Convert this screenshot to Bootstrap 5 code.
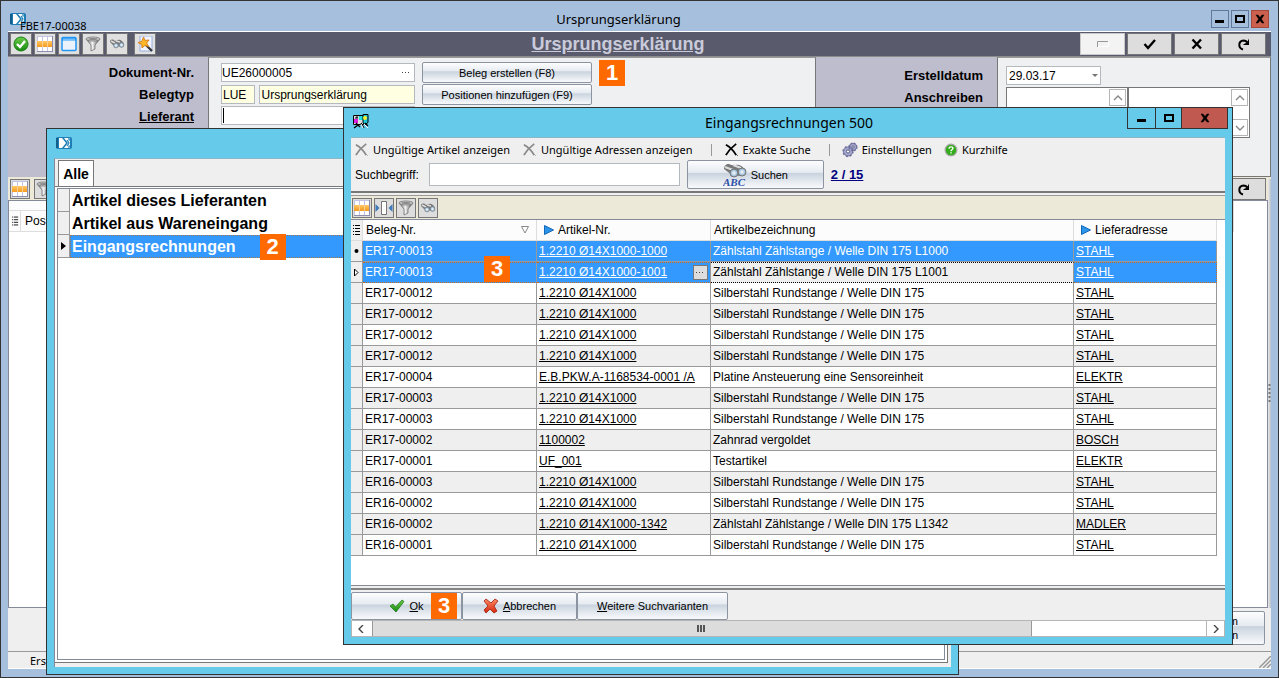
<!DOCTYPE html>
<html lang="de">
<head>
<meta charset="utf-8">
<meta name="viewport" content="width=device-width, initial-scale=1">
<title>Ursprungserklärung</title>
<link href="https://cdn.jsdelivr.net/npm/bootstrap@5.3.0/dist/css/bootstrap.min.css" rel="stylesheet">
<style>
  body { font: 12px/16px "Liberation Sans", Arial, sans-serif; color: #000; overflow: hidden; }
  button { font: inherit; color: inherit; }
  a { color: inherit; }
  svg { display: block; flex: none; }
  .ui-font { font-family: "Noto Sans", "Open Sans", sans-serif; }

  /* main window */
  .main-window { background: #a6bfdc; border: 1px solid #333; padding: 0 7px 8px; }
  .main-title { height: 31px; border-bottom: 1px solid #fff; padding-right: 42px; }
  .title-text { font-size: 14px; line-height: 18px; }
  .main-title .title-text { font-size: 13px; margin-top: 9px; }
  .doc-id { left: 12px; top: 18px; font-size: 11px; line-height: 14px; }
  .doc-icon { left: 2px; top: 12px; }
  .win-btns { gap: 2px; top: 9px; right: 2px; }
  .win-btns button { width: 18px; height: 18px; padding: 0; border: 1px solid #62779c; background: #a6bfdc; display: grid; place-items: center; }
  .win-btns .close-btn { background: #cb604f; border-color: #a5483c; }
  .dark-bar { background: #595b6c; height: 24px; gap: 2px; padding: 1px 5px 1px 2px; }
  .dark-bar h1 { font-size: 18px; line-height: 22px; font-weight: bold; color: #c9cbdb; text-decoration: underline; margin: 0; }
  .tool-btn { width: 22px; height: 22px; padding: 0; border: 1px solid #777; background: #e0e0e0; display: grid; place-items: center; flex: none; }
  .nav-btn { width: 45px; height: 22px; padding: 0; border: 1px solid #777; background: #ddd; display: grid; place-items: center; }
  .nav-btn.disabled-look { background: #f3f3f3; border-color: #c9c9c9; }

  .form-area { display: grid; grid-template-columns: 200px 1fr 181px 274px; height: 121px; border-top: 1px solid #8c8c8c; }
  .label-col { background: #bdbdce; font-weight: bold; font-size: 13px; line-height: 22px; text-align: right; padding: 5px 14px 0 0; }
  .label-col label { display: block; }
  .field-col { background: #eff0f2; border: 1px solid #777; border-top-color: #999; padding: 4px 0 0 12px; }
  .field { height: 19px; border: 1px solid #b4b9bf; background: #fff; padding: 0; font: inherit; border-radius: 0; min-width: 0; color: #000; }
  .field.yellow { background: #ffffe1; padding-left: 1px; }
  .field.with-caret { background: linear-gradient(#000, #000) 1px 1px / 1px 15px no-repeat #fff; }
  .form-grid { display: grid; grid-template-columns: 194px 170px 26px; column-gap: 7px; row-gap: 1px; }
  .w-code { width: 35px; }
  .glossy { border: 1px solid #8c93a1; border-radius: 2px; background: linear-gradient(#fdfdfe 0%, #e6ebf1 42%, #c9d3de 46%, #e4e9ef 75%, #f8f9fb 100%); padding: 0; font-size: 11px; }
  .form-grid .glossy { height: 21px; line-height: 18px; }
  .callout-no { background: #ff6a00; color: #fff; font: bold 22px/26px "Liberation Sans", Arial, sans-serif; width: 26px; height: 26px; text-align: center; display: block; text-decoration: none; }
  .memo-pair { margin-top: 2px; }
  .memo { border: 1px solid #777; background: #fff; height: 51px; width: 122px; padding: 1px; }
  .memo textarea { border: 0; resize: none; min-width: 0; }
  .scroll-btn { width: 17px; height: 17px; border: 1px solid #b5b5b5; background: #fff; padding: 0; display: grid; place-items: center; flex: none; }
  .date-box { width: 95px; height: 19px; border: 1px solid #b4b9bf; background: #fff; }
  .date-box input { border: 0; padding: 0 2px; min-width: 0; }
  .date-box button { border: 0; background: none; padding: 0; width: 20px; display: grid; place-items: center; }

  .beige { background: #ece9d8; }
  .lower-strip { height: 23px; padding: 0 5px 0 2px; }
  .sq-btn { width: 20px; height: 20px; border: 1px solid #777; background: #ddd; padding: 0; display: grid; place-items: center; }
  .pos-grid { background: #fff; border: 1px solid #858a98; margin-right: 3px; }
  .pos-head { max-width: calc(100% - 33px); background: #fcfcfc; border-right: 1px solid #ddd; border-bottom: 1px solid #ddd; height: 31px; }
  .pos-head span { line-height: 20px; height: 21px; border-top: 1px solid #ddd; border-right: 1px solid #ddd; }
  .pos-head .pos-mark { width: 12px; padding: 5px 0 0 3px; }
  .pos-head .pos-mark svg { width: 7px; }
  .foot-area { background: #efefef; height: 43px; padding: 3px 6px 6px; gap: 6px; }
  .foot-area .glossy { width: 113px; line-height: 14px; padding-right: 26px; text-align: right; }
  .status-line { background: #efefef; border-top: 1px solid #999; border-bottom: 1px solid #fff; height: 18px; padding-left: 22px; font-size: 11px; line-height: 17px; }
  .splitter { right: 7px; top: 178px; bottom: 69px; width: 3px; background: linear-gradient(90deg, #e9e9e9, #b9bfc9); }
  .splitter svg { margin-top: 205px; }

  /* cyan windows */
  .cyan-window { background: #66cbea; border: 1px solid #333; position: absolute; }
  .chooser { left: 45px; top: 127px; right: 319px; bottom: 2px; padding: 0 7px 7px; }
  .chooser-title { height: 29px; padding: 8px 0 0 2px; }
  .chooser-body { background: #efefef; border-top: 1px solid #8fb6c6; border-left: 1px solid #858a98; padding: 0 3px 4px 0; }
  .tab-strip { height: 27px; padding: 1px 0 0 3px; }
  .tab-strip button { background: #fff; border: 1px solid #777; border-bottom: 0; font-size: 14px; font-weight: bold; width: 36px; padding: 0; }
  .tab-body { background: #fff; border: solid #777; border-width: 1px 1px 1px 0; padding: 1px 2px 2px; }
  .pick-box { border: 1px solid #858a98; }
  .pick-row { height: 23px; display: grid; grid-template-columns: 12px 1fr; font-size: 16px; line-height: 22px; font-weight: bold; }
  .pick-row .mark-cell { background: #efefef; border: solid #999; border-width: 0 1px 1px 0; display: grid; place-items: center; }
  .pick-row button { border: 1px solid transparent; background: none; text-align: left; padding: 0 1px; font-weight: bold; line-height: 21px; }
  .pick-row button.selected-pick { background: #39f; color: #fff; border: 1px dotted #a8754d; }

  .invoices { left: 342px; top: 106px; right: 45px; bottom: 32px; padding: 0 7px 7px; }
  .inv-title { height: 29px; }
  .inv-title .title-text { margin-top: 6px; }
  .inv-icon { margin: 4px 0 0 2px; }
  .inv-btns { right: -3px; top: -1px; border: 1px solid #333; height: 22px; }
  .inv-btns button { border: 0; border-left: 1px solid #333; background: #66cbea; padding: 0; display: grid; place-items: center; }
  .inv-btns button:nth-child(1) { width: 27px; border-left: 0; }
  .inv-btns button:nth-child(2) { width: 26px; }
  .inv-btns button:nth-child(3) { width: 46px; background: #c05a50; }
  .inv-body { background: #efefef; border-top: 1px solid #8fb6c6; }
  .menu-line { height: 23px; padding-left: 3px; font-size: 11px; }
  .menu-line button { border: 0; background: none; padding: 0; display: flex; align-items: center; gap: 4px; white-space: nowrap; line-height: 18px; }
  .menu-sep { width: 1px; height: 12px; background: #999; margin-left: 18px; }
  .search-line { height: 32px; padding: 0 0 3px 4px; border-bottom: 2px solid #777; }
  .search-line input { width: 251px; height: 23px; border: 1px solid #b4b9bf; margin: 0 7px 0 10px; padding: 0 3px; }
  .search-line .glossy { width: 137px; height: 29px; gap: 4px; }
  .hit-count { color: #000080; font: bold 13px/16px "Liberation Sans", sans-serif; margin-left: 7px; }
  .inv-tools { height: 25px; border-top: 1px solid #999; border-bottom: 1px solid #858a98; margin-top: 2px; padding-left: 1px; gap: 2px; }
  .data-area { background: #fff; border-bottom: 1px solid #858a98; padding-right: 8px; }
  .inv-table { table-layout: fixed; width: 100%; border-collapse: separate; border-spacing: 0; }
  .col-mark { width: 12px; }
  .col-doc { width: 174px; }
  .col-addr { width: 143px; }
  .inv-table th, .inv-table td { height: 21px; padding: 0 2px; font-weight: normal; line-height: 20px; border: solid #999; border-width: 0 1px 1px 0; white-space: nowrap; overflow: hidden; }
  .inv-table th { background: #fcfcfc; border-color: #ddd; padding: 0 3px; }
  .inv-table tr > :first-child { padding: 0; background: #efefef; }
  .inv-table tbody tr:nth-child(even) { background: #efefef; }
  .inv-table tbody tr.hit { background: #39f; color: #fff; }
  .inv-table tr.hit > td { overflow: visible; }
  .inv-table tr.current td:not(:first-child) { border-top: 1px dotted #c96a1b; border-bottom: 1px dotted #c96a1b; line-height: 19px; }
  .inv-table tr.current td.edit-cell { background: #efefef; color: #000; border-top-color: #000 !important; border-bottom-color: #000 !important; }
  .inv-table tr.current td:last-child { border-right: 1px dotted #c96a1b; }
  .dots-btn { width: 15px; height: 15px; border: 1px solid #777; background: #ddd; padding: 0; display: grid; place-items: center; }
  .action-bar { border-top: 2px solid #858585; margin-top: 2px; padding-top: 2px; height: 32px; }
  .action-bar .glossy { height: 28px; gap: 4px; width: 115px; }
  .action-bar .glossy:first-child { width: 111px; }
  .action-bar .glossy:last-child { width: 151px; }
  .hbar { height: 17px; background: #fff; border: 1px solid #b5b5b5; }
  .hbar button { border: 0; background: none; width: 17px; padding: 0; display: grid; place-items: center; }
  .hbar-thumb { flex: 661 1 0; background: #dcdcdc; border: solid #999; border-width: 0 1px; margin-left: 3px; display: grid; place-items: center; }
  .hbar-rest { flex: 175 1 0; border-right: 1px solid #b5b5b5; }
</style>
</head>
<body>

<svg width="0" height="0" class="position-absolute" aria-hidden="true">
  <defs>
    <linearGradient id="gMetal" x1="0" x2="1"><stop offset="0" stop-color="#555"/><stop offset=".45" stop-color="#f4f4f4"/><stop offset="1" stop-color="#444"/></linearGradient>
    <linearGradient id="gGreen" x1="0" x2="0" y1="0" y2="1"><stop offset="0" stop-color="#6ccc4a"/><stop offset="1" stop-color="#158a10"/></linearGradient>
    <linearGradient id="gRed" x1="0" x2="0" y1="0" y2="1"><stop offset="0" stop-color="#ff8a66"/><stop offset="1" stop-color="#d4260c"/></linearGradient>
    <linearGradient id="gOrange" x1="0" x2="0" y1="0" y2="1"><stop offset="0" stop-color="#ffc766"/><stop offset="1" stop-color="#f49a1e"/></linearGradient>
    <radialGradient id="gLens"><stop offset="0" stop-color="#fff"/><stop offset="1" stop-color="#7fa9cc"/></radialGradient>
    <symbol id="app" viewBox="0 0 16 12"><rect width="16" height="12" rx="2" fill="#1f7fb5"/><path d="M1 1v10" stroke="#125e8c" stroke-width="2"/><path d="M3 1h3l4 5-4 5H3z" fill="#fff"/><path d="M8 1h6v10H8l4-5z" fill="#fff"/><path d="M11 3l2 3-2 3M13 1v2h2M13 11V9h2" fill="none" stroke="#1f7fb5" stroke-width="1.200"/></symbol>
    <symbol id="ok" viewBox="0 0 16 16"><circle cx="8" cy="8" r="7" fill="url(#gGreen)" stroke="#178014"/><path d="M4 8l3 3 5-6" fill="none" stroke="#fff" stroke-width="2.400"/></symbol>
    <symbol id="grid" viewBox="0 0 16 16"><path d="M0 0h16v16H0z" fill="#fff"/><path d="M5.500 0v16M10.500 0v16M.5 0v16M0 .5h16" stroke="#c3c3e3"/><path d="M0 5h16v6H0z" fill="url(#gOrange)"/><path d="M5.500 5v6M10.500 5v6" stroke="#f9d08f"/><path d="M0 15.500h16M15.500 0v16" stroke="#8d8db0"/></symbol>
    <symbol id="win" viewBox="0 0 16 16"><rect x="1" y="1.500" width="14" height="13" rx="1" fill="#eaf3fc" stroke="#2196f3" stroke-width="1.500"/><path d="M1 3h14" stroke="#2196f3" stroke-width="3"/><path d="M2 3.200h12" stroke="#9ed3ff"/></symbol>
    <symbol id="funnel" viewBox="0 0 16 16"><path d="M1 3l5 6v6l4-2V9l5-6z" fill="url(#gMetal)" stroke="#666" stroke-width=".7"/><ellipse cx="8" cy="3" rx="7" ry="2" fill="#c9c9c9" stroke="#777" stroke-width=".8"/><ellipse cx="8" cy="3" rx="4.500" ry="1" fill="#8a8a8a"/></symbol>
    <symbol id="bino" viewBox="0 0 16 16"><path d="M1 6c0-3 3-3 5-1l3-1c2-1 5 1 6 4l-2 3-5-1-4-1z" fill="#777"/><path d="M2 5l4 2M7 5l4 1" stroke="#ddd" stroke-width="1.500"/><circle cx="7" cy="9.500" r="2.400" fill="url(#gLens)" stroke="#777" stroke-width=".6"/><circle cx="12.500" cy="9" r="2.400" fill="url(#gLens)" stroke="#777" stroke-width=".6"/></symbol>
    <symbol id="wand" viewBox="0 0 16 16"><path d="M3 0h12v15H3z" fill="#f2f5ff" stroke="#9aaede"/><path d="M9 9l6 6" stroke="#333" stroke-width="2.200"/><path d="M6.500 1l1.600 3.400 3.900-.4-2.400 3 2 3.600-3.700-1.200L5 12l-.2-3.600L1 6.600l3.800-1.200z" fill="#fdb827" stroke="#d67b14" stroke-width=".9"/></symbol>
    <symbol id="colw" viewBox="0 0 18 16"><path d="M6.500 1.500h5v13h-5z" fill="#fff" stroke="#777"/><path d="M.5 4v8l4-4zM17.500 4v8l-4-4z" fill="#3f79b8"/></symbol>
    <symbol id="ximg" viewBox="0 0 16 16"><path d="M2 3c4 2 8 6 11 11M13 2C9 5 5 9 2 14" fill="none" stroke="currentColor" stroke-width="1.900"/><path d="M13.500 13.500l1 1" stroke="currentColor"/></symbol>
    <symbol id="gears" viewBox="0 0 16 16"><g fill="#a7a9cd" stroke="#5a5c8c" stroke-width=".8"><circle cx="11" cy="5" r="3.600"/><circle cx="6" cy="9.500" r="4.500"/></g><circle cx="6" cy="9.500" r="5" fill="none" stroke="#6c6e9c" stroke-width="1.300" stroke-dasharray="2 1.900"/><circle cx="11" cy="5" r="4" fill="none" stroke="#6c6e9c" stroke-width="1.200" stroke-dasharray="1.700 1.500"/><circle cx="6" cy="9.500" r="1.600" fill="#fff" stroke="#5a5c8c"/><circle cx="11" cy="5" r="1.200" fill="#fff" stroke="#5a5c8c"/></symbol>
    <symbol id="help" viewBox="0 0 16 16"><circle cx="8" cy="8" r="6.700" fill="#33ad1b" stroke="#a9a9a9" stroke-width="1.400"/><path d="M5.800 6.500c0-3 4.600-2.600 4.400-.2C10 7.700 8 7.800 8 9.400M8 10.500v1.500" fill="none" stroke="#fff" stroke-width="1.600"/></symbol>
    <symbol id="tri" viewBox="0 0 10 10"><path d="M.5.500v9L9.500 5z" fill="#2b95ea" stroke="#1567b8"/></symbol>
    <symbol id="tick" viewBox="0 0 16 14"><path d="M1 7l3-2 2.500 3L13 1l2 1.500L7 13z" fill="url(#gGreen)" stroke="#13700f" stroke-width=".7"/></symbol>
    <symbol id="redx" viewBox="0 0 16 16"><path d="M3 1l5 4 4-4 3 2-4 5 3 5-3 2-4-4-4 4-2-3 4-4-4-5z" fill="url(#gRed)" stroke="#a01c08" stroke-width=".8"/></symbol>
    <symbol id="redo" viewBox="0 0 14 14"><path d="M6 12.500C1 11 1 4 6.500 3.500c2 0 3 .8 4 2" fill="none" stroke="#000" stroke-width="2"/><path d="M12 1.500v6.500H5.800l2-1.500 2.200-.8z" fill="#000"/></symbol>
    <symbol id="up" viewBox="0 0 10 10"><path d="M1 7l4-4 4 4" fill="none" stroke="#888" stroke-width="1.400"/></symbol>
    <symbol id="down" viewBox="0 0 10 10"><path d="M1 3l4 4 4-4" fill="none" stroke="#888" stroke-width="1.400"/></symbol>
    <symbol id="cross" viewBox="0 0 10 10"><path d="M1 1h2l2 2.500L7 1h2L6.300 5 9 9H7L5 6.500 3 9H1l2.700-4z" fill="#000" stroke="#000" stroke-width=".5"/></symbol>
    <symbol id="mini" viewBox="0 0 10 10"><path d="M0 6h9v3H0z"/></symbol>
    <symbol id="maxi" viewBox="0 0 10 10"><path d="M1 2h8v6H1z" fill="none" stroke="#000" stroke-width="2"/></symbol>
    <symbol id="rows" viewBox="0 0 8 10"><path d="M0 .5h1M2 .5h5M0 3.500h1M2 3.500h5M0 6.500h1M2 6.500h5M0 9.500h1M2 9.500h5" stroke="#000"/></symbol>
    <symbol id="report" viewBox="0 0 16 15"><path d="M0 1h10v10H0z" fill="#fff"/><path d="M.5 1.500h10v9H.5zM2 4h3M4 1v3" fill="#ddd" stroke="#000"/><path d="M1 5h4v4H1z" fill="#e01ce0"/><path d="M6 2h4v4H6z" fill="#1fe0e0"/><path d="M10 .5h5v8l-3 2-2-2z" fill="#19c8d8" stroke="#000"/><circle cx="12" cy="4" r="2" fill="#ffee2a"/><path d="M1 14l4-3M3 9l4 4M8 9l3 5M12 9l3 3" stroke="#000" stroke-width="1.300"/><path d="M8 10l2 4M11 10l4 4" stroke="#fff"/></symbol>
    <symbol id="dots" viewBox="0 0 9 2"><path d="M0 .5h1M3 .5h1M6 .5h1" stroke="#444"/></symbol>
  </defs>
</svg>

<main class="main-window d-flex flex-column vh-100 position-relative">
  <header class="main-title d-flex justify-content-center position-relative flex-shrink-0">
    <svg class="doc-icon position-absolute" width="16" height="12"><use href="#app"/></svg>
    <span class="doc-id ui-font position-absolute">FBE17-00038</span>
    <span class="title-text ui-font">Ursprungserklärung</span>
    <div class="win-btns d-flex position-absolute">
      <button type="button" aria-label="Minimieren"><svg width="10" height="10"><use href="#mini"/></svg></button>
      <button type="button" aria-label="Maximieren"><svg width="10" height="10"><use href="#maxi"/></svg></button>
      <button type="button" class="close-btn" aria-label="Schließen"><svg width="10" height="10"><use href="#cross"/></svg></button>
    </div>
  </header>

  <div class="dark-bar d-flex flex-shrink-0">
    <button type="button" class="tool-btn" aria-label="Bestätigen"><svg width="16" height="16"><use href="#ok"/></svg></button>
    <button type="button" class="tool-btn" aria-label="Tabelle"><svg width="16" height="16"><use href="#grid"/></svg></button>
    <button type="button" class="tool-btn" aria-label="Fenster"><svg width="16" height="16"><use href="#win"/></svg></button>
    <button type="button" class="tool-btn" aria-label="Filter"><svg width="16" height="16"><use href="#funnel"/></svg></button>
    <button type="button" class="tool-btn" aria-label="Suchen"><svg width="16" height="16"><use href="#bino"/></svg></button>
    <button type="button" class="tool-btn ms-1" aria-label="Assistent"><svg width="16" height="16"><use href="#wand"/></svg></button>
    <h1 class="flex-grow-1 text-center">Ursprungserklärung</h1>
    <button type="button" class="nav-btn disabled-look" aria-label="Leeren"><svg width="12" height="6"><path d="M.5 6V.5H11" fill="none" stroke="#999"/><path d="M11.500 1v4.500H1" fill="none" stroke="#fff"/></svg></button>
    <button type="button" class="nav-btn" aria-label="Speichern"><svg width="14" height="12"><path d="M1.500 6l3.500 4L12 2" fill="none" stroke="#000" stroke-width="2.400"/></svg></button>
    <button type="button" class="nav-btn" aria-label="Abbrechen"><svg width="12" height="12"><path d="M1.500 1.500l8.500 9M10 1.500l-8.500 9" stroke="#000" stroke-width="2.400"/></svg></button>
    <button type="button" class="nav-btn" aria-label="Aktualisieren"><svg width="14" height="14"><use href="#redo"/></svg></button>
  </div>

  <form class="form-area flex-shrink-0">
    <div class="label-col">
      <label for="docNo">Dokument-Nr.</label>
      <label for="typeCode">Belegtyp</label>
      <label for="supplier" class="text-decoration-underline">Lieferant</label>
    </div>
    <div class="field-col">
      <div class="form-grid">
        <div class="position-relative d-flex align-items-center">
          <input id="docNo" class="field w-100" value="UE26000005">
          <svg class="position-absolute end-0 me-1" width="9" height="2"><use href="#dots"/></svg>
        </div>
        <button type="button" class="glossy">Beleg erstellen (F8)</button>
        <div class="position-relative"><span class="callout-no position-absolute top-50 start-50 translate-middle">1</span></div>
        <div class="d-flex align-items-center gap-1">
          <input id="typeCode" class="field yellow w-code" value="LUE">
          <input class="field yellow flex-grow-1" aria-label="Belegtyp Bezeichnung" value="Ursprungserklärung">
        </div>
        <button type="button" class="glossy">Positionen hinzufügen (F9)</button>
        <span></span>
        <div class="d-flex"><input id="supplier" class="field with-caret w-100" value=""></div>
      </div>
    </div>
    <div class="label-col pt-2">
      <label for="date">Erstelldatum</label>
      <label for="letter">Anschreiben</label>
    </div>
    <div class="field-col ps-2 pt-2">
      <div class="date-box d-flex">
        <input id="date" class="flex-grow-1" value="29.03.17">
        <button type="button" aria-label="Kalender"><svg width="6" height="4"><path d="M0 0h6L3 3z" fill="#777"/></svg></button>
      </div>
      <div class="memo-pair d-flex">
        <div class="memo d-flex">
          <textarea id="letter" class="flex-grow-1"></textarea>
          <div class="d-flex flex-column justify-content-between">
            <button type="button" class="scroll-btn" aria-label="Nach oben"><svg width="10" height="10"><use href="#up"/></svg></button>
            <button type="button" class="scroll-btn" aria-label="Nach unten"><svg width="10" height="10"><use href="#down"/></svg></button>
          </div>
        </div>
        <div class="memo d-flex">
          <textarea class="flex-grow-1" aria-label="Anschreiben Text"></textarea>
          <div class="d-flex flex-column justify-content-between">
            <button type="button" class="scroll-btn" aria-label="Nach oben"><svg width="10" height="10"><use href="#up"/></svg></button>
            <button type="button" class="scroll-btn" aria-label="Nach unten"><svg width="10" height="10"><use href="#down"/></svg></button>
          </div>
        </div>
      </div>
    </div>
  </form>

  <div class="lower-strip beige d-flex align-items-center flex-shrink-0">
    <button type="button" class="sq-btn" aria-label="Tabelle"><svg width="16" height="16"><use href="#grid"/></svg></button>
    <button type="button" class="sq-btn ms-1" aria-label="Filter"><svg width="16" height="16"><use href="#funnel"/></svg></button>
    <button type="button" class="nav-btn ms-auto" aria-label="Aktualisieren"><svg width="14" height="14"><use href="#redo"/></svg></button>
  </div>

  <section class="pos-grid flex-grow-1">
    <div class="pos-head d-flex align-items-end">
      <span class="pos-mark"><svg width="8" height="10"><use href="#rows"/></svg></span>
      <span class="flex-grow-1 ps-1 border-end-0">Pos</span>
    </div>
  </section>

  <div class="foot-area d-flex justify-content-end flex-shrink-0">
    <button type="button" class="glossy" aria-label="Aktion"></button>
    <button type="button" class="glossy">m<br>n</button>
  </div>
  <footer class="status-line ui-font d-flex justify-content-between flex-shrink-0">
    <span>Erst</span>
    <svg class="align-self-end" width="12" height="12"><path d="M0 12L12 0M4 12l8-8M8 12l4-4" stroke="#999" stroke-width="1.500"/></svg>
  </footer>
  <div class="splitter position-absolute"><svg width="3" height="20"><path d="M1.500 0v20" stroke="#777" stroke-width="2" stroke-dasharray="2 2"/></svg></div>

  <!-- source selection window -->
  <section class="cyan-window chooser d-flex flex-column">
    <header class="chooser-title"><svg width="16" height="12"><use href="#app"/></svg></header>
    <div class="chooser-body flex-grow-1 d-flex flex-column">
      <div class="tab-strip d-flex"><button type="button">Alle</button></div>
      <div class="tab-body flex-grow-1 d-flex">
        <div class="pick-box flex-grow-1">
          <div class="pick-row"><span class="mark-cell"></span><button type="button">Artikel dieses Lieferanten</button></div>
          <div class="pick-row"><span class="mark-cell"></span><button type="button">Artikel aus Wareneingang</button></div>
          <div class="pick-row"><span class="mark-cell"><svg width="5" height="8"><path d="M0 0v8l5-4z"/></svg></span>
            <button type="button" class="selected-pick"><span class="position-relative d-inline-block">Eingangsrechnungen<span class="callout-no position-absolute top-50 start-100 translate-middle-y ms-4">2</span></span></button></div>
        </div>
      </div>
    </div>
  </section>

  <!-- incoming invoices window -->
  <section class="cyan-window invoices d-flex flex-column">
    <header class="inv-title d-flex position-relative">
      <svg class="inv-icon" width="16" height="17" viewBox="0 -2 16 17"><use href="#report" width="16" height="15"/></svg>
      <span class="title-text ui-font flex-grow-1 text-center pe-3">Eingangsrechnungen 500</span>
      <div class="inv-btns d-flex position-absolute">
        <button type="button" aria-label="Minimieren"><svg width="10" height="10"><use href="#mini"/></svg></button>
        <button type="button" aria-label="Maximieren"><svg width="10" height="10"><use href="#maxi"/></svg></button>
        <button type="button" aria-label="Schließen"><svg width="10" height="10"><use href="#cross"/></svg></button>
      </div>
    </header>
    <div class="inv-body flex-grow-1 d-flex flex-column">
      <div class="menu-line ui-font d-flex align-items-center">
        <button type="button"><svg width="15" height="15" color="#8a8a8a"><use href="#ximg"/></svg>Ungültige Artikel anzeigen</button>
        <button type="button" class="ms-2 ps-1"><svg width="15" height="15" color="#8a8a8a"><use href="#ximg"/></svg>Ungültige Adressen anzeigen</button>
        <span class="menu-sep"></span>
        <button type="button" class="ms-2 ps-1"><svg width="15" height="15"><use href="#ximg"/></svg>Exakte Suche</button>
        <span class="menu-sep"></span>
        <button type="button" class="ms-2 ps-1"><svg width="16" height="16"><use href="#gears"/></svg>Einstellungen</button>
        <button type="button" class="ms-2 ps-1"><svg width="14" height="14"><use href="#help"/></svg>Kurzhilfe</button>
      </div>
      <div class="search-line d-flex align-items-center">
        <label for="term">Suchbegriff:</label>
        <input id="term" value="">
        <button type="button" class="glossy d-flex align-items-center justify-content-center">
          <svg width="24" height="24" viewBox="0 0 24 24"><path d="M1 6c0-5 5-6 7-4l5 0c5-1 9 3 9 8l-4 3-9-1z" fill="#777"/><path d="M2 4l8 3M10 2l8 3" stroke="#ddd" stroke-width="2"/><circle cx="11" cy="10" r="4" fill="url(#gLens)" stroke="#777"/><circle cx="19" cy="9" r="4" fill="url(#gLens)" stroke="#777"/><text x="0" y="23" font-family="Liberation Serif, serif" font-size="11" font-weight="bold" font-style="italic" fill="#2b4fa5">ABC</text></svg>
          Suchen
        </button>
        <a href="#" class="hit-count">2 / 15</a>
      </div>
      <div class="inv-tools beige d-flex align-items-center">
        <button type="button" class="sq-btn" aria-label="Tabelle"><svg width="16" height="16"><use href="#grid"/></svg></button>
        <button type="button" class="sq-btn" aria-label="Spaltenbreite"><svg width="18" height="16"><use href="#colw"/></svg></button>
        <button type="button" class="sq-btn" aria-label="Filter"><svg width="16" height="16"><use href="#funnel"/></svg></button>
        <button type="button" class="sq-btn" aria-label="Suchen"><svg width="16" height="16"><use href="#bino"/></svg></button>
      </div>
      <div class="data-area flex-grow-1">
        <table class="inv-table">
          <colgroup><col class="col-mark"><col class="col-doc"><col class="col-doc"><col><col class="col-addr"></colgroup>
          <thead>
            <tr>
              <th aria-label="Markierung"><svg width="8" height="10" class="mx-auto"><use href="#rows"/></svg></th>
              <th><div class="d-flex align-items-center justify-content-between pe-1">Beleg-Nr.<svg width="8" height="8"><path d="M.5.500h7L4 7z" fill="#fff" stroke="#888"/></svg></div></th>
              <th><div class="d-flex align-items-center gap-1 ps-1"><svg width="10" height="10"><use href="#tri"/></svg>Artikel-Nr.</div></th>
              <th>Artikelbezeichnung</th>
              <th><div class="d-flex align-items-center gap-1 ps-1"><svg width="10" height="10"><use href="#tri"/></svg>Lieferadresse</div></th>
            </tr>
          </thead>
          <tbody>
            <tr class="hit"><td><svg width="5" height="6" class="mx-auto"><circle cx="2.500" cy="3" r="2"/></svg></td><td>ER17-00013</td><td><a href="#">1.2210 Ø14X1000-1000</a></td><td>Zählstahl Zählstange / Welle DIN 175 L1000</td><td><a href="#">STAHL</a></td></tr>
            <tr class="hit current"><td><svg width="5" height="9" class="mx-auto"><path d="M.5 1v7L4 4.500z" fill="#fff" stroke="#000"/></svg></td><td><div class="position-relative">ER17-00013<span class="callout-no position-absolute bottom-0 end-0 me-4">3</span></div></td><td><div class="d-flex align-items-center justify-content-between"><a href="#">1.2210 Ø14X1000-1001</a><button type="button" class="dots-btn" aria-label="Auswahl"><svg width="9" height="2"><use href="#dots"/></svg></button></div></td><td class="edit-cell">Zählstahl Zählstange / Welle DIN 175 L1001</td><td><a href="#">STAHL</a></td></tr>
            <tr><td></td><td>ER17-00012</td><td><a href="#">1.2210 Ø14X1000</a></td><td>Silberstahl Rundstange / Welle DIN 175</td><td><a href="#">STAHL</a></td></tr>
            <tr><td></td><td>ER17-00012</td><td><a href="#">1.2210 Ø14X1000</a></td><td>Silberstahl Rundstange / Welle DIN 175</td><td><a href="#">STAHL</a></td></tr>
            <tr><td></td><td>ER17-00012</td><td><a href="#">1.2210 Ø14X1000</a></td><td>Silberstahl Rundstange / Welle DIN 175</td><td><a href="#">STAHL</a></td></tr>
            <tr><td></td><td>ER17-00012</td><td><a href="#">1.2210 Ø14X1000</a></td><td>Silberstahl Rundstange / Welle DIN 175</td><td><a href="#">STAHL</a></td></tr>
            <tr><td></td><td>ER17-00004</td><td><a href="#">E.B.PKW.A-1168534-0001 /A</a></td><td>Platine Ansteuerung eine Sensoreinheit</td><td><a href="#">ELEKTR</a></td></tr>
            <tr><td></td><td>ER17-00003</td><td><a href="#">1.2210 Ø14X1000</a></td><td>Silberstahl Rundstange / Welle DIN 175</td><td><a href="#">STAHL</a></td></tr>
            <tr><td></td><td>ER17-00003</td><td><a href="#">1.2210 Ø14X1000</a></td><td>Silberstahl Rundstange / Welle DIN 175</td><td><a href="#">STAHL</a></td></tr>
            <tr><td></td><td>ER17-00002</td><td><a href="#">1100002</a></td><td>Zahnrad vergoldet</td><td><a href="#">BOSCH</a></td></tr>
            <tr><td></td><td>ER17-00001</td><td><a href="#">UF_001</a></td><td>Testartikel</td><td><a href="#">ELEKTR</a></td></tr>
            <tr><td></td><td>ER16-00003</td><td><a href="#">1.2210 Ø14X1000</a></td><td>Silberstahl Rundstange / Welle DIN 175</td><td><a href="#">STAHL</a></td></tr>
            <tr><td></td><td>ER16-00002</td><td><a href="#">1.2210 Ø14X1000</a></td><td>Silberstahl Rundstange / Welle DIN 175</td><td><a href="#">STAHL</a></td></tr>
            <tr><td></td><td>ER16-00002</td><td><a href="#">1.2210 Ø14X1000-1342</a></td><td>Zählstahl Zählstange / Welle DIN 175 L1342</td><td><a href="#">MADLER</a></td></tr>
            <tr><td></td><td>ER16-00001</td><td><a href="#">1.2210 Ø14X1000</a></td><td>Silberstahl Rundstange / Welle DIN 175</td><td><a href="#">STAHL</a></td></tr>
          </tbody>
        </table>
      </div>
      <div class="action-bar d-flex">
        <button type="button" class="glossy d-flex align-items-center justify-content-center position-relative"><svg width="16" height="14"><use href="#tick"/></svg><span><u>O</u>k</span><span class="callout-no position-absolute top-0 end-0 me-1">3</span></button>
        <button type="button" class="glossy d-flex align-items-center justify-content-center"><svg width="16" height="16"><use href="#redx"/></svg><span><u>A</u>bbrechen</span></button>
        <button type="button" class="glossy"><u>W</u>eitere Suchvarianten</button>
      </div>
      <div class="hbar d-flex">
        <button type="button" aria-label="Nach links"><svg width="6" height="8"><path d="M5 0L1 4l4 4" fill="none" stroke="#444" stroke-width="1.400"/></svg></button>
        <div class="hbar-thumb"><svg width="9" height="7"><path d="M1 0v7M4 0v7M7 0v7" stroke="#555" stroke-width="2"/></svg></div>
        <div class="hbar-rest"></div>
        <button type="button" aria-label="Nach rechts"><svg width="6" height="8"><path d="M1 0l4 4-4 4" fill="none" stroke="#444" stroke-width="1.400"/></svg></button>
      </div>
    </div>
  </section>
</main>

<script src="https://cdn.jsdelivr.net/npm/bootstrap@5.3.0/dist/js/bootstrap.bundle.min.js"></script>
</body>
</html>
